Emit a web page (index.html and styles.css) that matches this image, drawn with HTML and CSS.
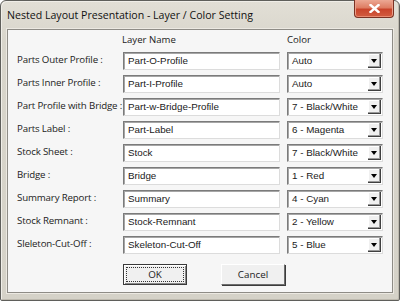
FILE: index.html
```html
<!DOCTYPE html>
<html>
<head>
<meta charset="utf-8">
<link rel="stylesheet" href="styles.css">
</head>
<body>
<div class="window">
  <div class="titlebar">
    <span class="title">Nested Layout Presentation - Layer / Color Setting</span>
    <button class="close" type="button" aria-label="Close">
      <svg width="11" height="9" viewBox="0 0 11 9"><path d="M1.5 1 L9.5 8 M9.5 1 L1.5 8" stroke="#fff" stroke-width="2.4" stroke-linecap="square"/></svg>
    </button>
  </div>
  <div class="client">
    <div class="grid">
      <div class="head"></div>
      <div class="head head-name">Layer Name</div>
      <div class="head">Color</div>

      <div class="label">Parts Outer Profile :</div>
      <div class="field">Part-O-Profile</div>
      <div class="combo"><span class="val">Auto</span><span class="drop"><i></i></span></div>

      <div class="label">Parts Inner Profile :</div>
      <div class="field">Part-I-Profile</div>
      <div class="combo"><span class="val">Auto</span><span class="drop"><i></i></span></div>

      <div class="label">Part Profile with Bridge :</div>
      <div class="field">Part-w-Bridge-Profile</div>
      <div class="combo"><span class="val">7 - Black/White</span><span class="drop"><i></i></span></div>

      <div class="label">Parts Label :</div>
      <div class="field">Part-Label</div>
      <div class="combo"><span class="val">6 - Magenta</span><span class="drop"><i></i></span></div>

      <div class="label">Stock Sheet :</div>
      <div class="field">Stock</div>
      <div class="combo"><span class="val">7 - Black/White</span><span class="drop"><i></i></span></div>

      <div class="label">Bridge :</div>
      <div class="field">Bridge</div>
      <div class="combo"><span class="val">1 - Red</span><span class="drop"><i></i></span></div>

      <div class="label">Summary Report :</div>
      <div class="field">Summary</div>
      <div class="combo"><span class="val">4 - Cyan</span><span class="drop"><i></i></span></div>

      <div class="label">Stock Remnant :</div>
      <div class="field">Stock-Remnant</div>
      <div class="combo"><span class="val">2 - Yellow</span><span class="drop"><i></i></span></div>

      <div class="label">Sleleton-Cut-Off :</div>
      <div class="field">Skeleton-Cut-Off</div>
      <div class="combo"><span class="val">5 - Blue</span><span class="drop"><i></i></span></div>
    </div>
    <div class="buttons">
      <button class="btn btn-default" type="button"><span class="focus">OK</span></button>
      <button class="btn" type="button">Cancel</button>
    </div>
  </div>
</div>
</body>
</html>
```

FILE: styles.css
```css
html, body {
  margin: 0;
  padding: 0;
  background: #ffffff;
}

.window {
  box-sizing: border-box;
  width: 400px;
  height: 301px;
  background: linear-gradient(#e2dfd6, #d8d5cb 40px, #d5d2c8);
  border: 1px solid #5f5f5b;
  border-radius: 6px 6px 2px 2px;
  padding: 0 6px 7px;
  display: flex;
  flex-direction: column;
  box-shadow: inset 1px 1px 0 #f0eee8, inset -1px -1px 0 #bdb9ae;
  font-family: "Open Sans", "Noto Sans", sans-serif;
  color: #000;
}

.titlebar {
  height: 28px;
  display: flex;
  align-items: flex-start;
  justify-content: space-between;
}

.title {
  font-size: 10.6px;
  line-height: 14px;
  margin-top: 7px;
  color: #111;
}

.close {
  width: 40px;
  height: 18px;
  margin: -1px -1px 0 0;
  padding: 0;
  border: 1px solid #7a3123;
  border-top: none;
  border-radius: 0 0 4px 4px;
  background: linear-gradient(#eca894, #de7d63 45%, #c9442b 55%, #d25c40);
  box-shadow: inset 0 -1px 0 #e88a70, inset 1px 0 0 #e9a08c, inset -1px 0 0 #e9a08c;
  display: flex;
  align-items: center;
  justify-content: center;
}

.client {
  flex: 1;
  background: #f6f6f6;
  border: 1px solid #8e8c86;
  box-shadow: 0 0 0 1px #ece9e2;
  padding: 3px 0 0 9px;
}

.grid {
  display: grid;
  grid-template-columns: 99px 157px 96px;
  grid-template-rows: 14px repeat(9, 18px);
  column-gap: 7px;
  row-gap: 5px;
}

.head {
  font-size: 9.6px;
  line-height: 14px;
  color: #222;
  align-self: start;
}

.head-name {
  margin-left: -1px;
}

.label {
  font-size: 9.7px;
  letter-spacing: -0.15px;
  line-height: 16px;
  color: #222;
  white-space: nowrap;
}

.field,
.combo {
  box-sizing: border-box;
  height: 18px;
  background: #ffffff;
  border-style: solid;
  border-width: 1px;
  border-color: #7b7b7b #dcdcdc #dcdcdc #7b7b7b;
  box-shadow: inset 1px 1px 0 #a6a6a6;
  font-family: "Liberation Sans", Arial, sans-serif;
  font-size: 9.8px;
  line-height: 16px;
  color: #1a1a1a;
}

.field {
  padding-left: 4px;
}

.combo {
  display: flex;
  align-items: stretch;
}

.val {
  flex: 1;
  padding-left: 4px;
}

.drop {
  width: 12px;
  margin: 1px 1px 1px 0;
  background: #f0f0f0;
  border-right: 1px solid #404040;
  border-bottom: 1px solid #404040;
  box-shadow: inset -1px -1px 0 #9a9a9a, inset 1px 1px 0 #ffffff;
  display: flex;
  align-items: center;
  justify-content: center;
}

.drop i {
  display: block;
  width: 0;
  height: 0;
  border-left: 3.5px solid transparent;
  border-right: 3.5px solid transparent;
  border-top: 4px solid #000;
  margin-top: 1px;
}

.buttons {
  display: flex;
  gap: 34px;
  padding-left: 106px;
  margin-top: 10px;
}

.btn {
  box-sizing: border-box;
  width: 64px;
  height: 21px;
  padding: 0;
  font-family: "Open Sans", "Noto Sans", sans-serif;
  font-size: 9.8px;
  color: #222;
  background: #f0f0f0;
  border-style: solid;
  border-width: 1px;
  border-color: #ffffff #6e6e6e #6e6e6e #ffffff;
  box-shadow: 1px 1px 0 #3c3c3c;
  display: flex;
  align-items: center;
  justify-content: center;
}

.btn-default {
  border: 1px solid #3a3a3a;
  box-shadow: inset 1px 1px 0 #ffffff, inset -1px -1px 0 #8a8a8a;
  padding: 2px;
}

.focus {
  flex: 1;
  align-self: stretch;
  display: flex;
  align-items: center;
  justify-content: center;
  outline: 1px dotted #333;
  outline-offset: -1px;
}
```
